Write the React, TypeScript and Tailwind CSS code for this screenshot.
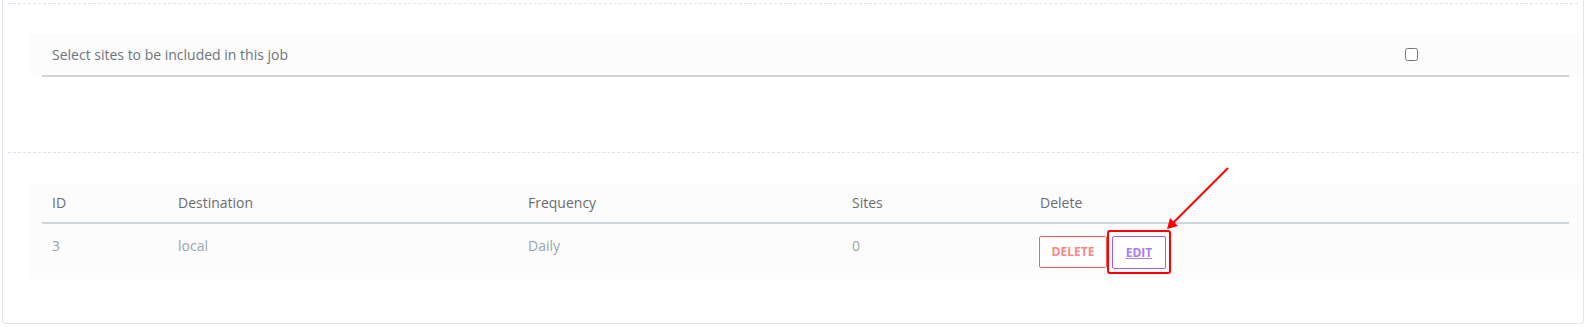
import React from "react";

interface Job {
    id: number;
    destination: string;
    frequency: string;
    sites: number;
}

const jobs: Job[] = [{ id: 3, destination: "local", frequency: "Daily", sites: 0 }];

const cols = "grid grid-cols-[126px_350px_324px_188px_1fr]";

export default function App() {
    return (
        <div className="bg-white pl-[2px] pr-[5px] h-[327px] overflow-hidden font-['Open_Sans',sans-serif] text-[14px]">
            <div className="border-x border-b border-[#dde5ee] rounded-b-[4px] h-[324px]">
                <div className="h-[4px] mx-[5px] border-b border-dashed border-[#dbe3ec]" />

                <div className="mx-[5px] mr-[4px] border-b border-dashed border-[#dbe3ec]">
                    <div className="pt-[30px] pb-[75px] ml-[22px] -mr-[1px]">
                        <div className="bg-[#fcfcfc] rounded-[4px] pl-[12px] pr-[11px]">
                            <div className="grid grid-cols-[1fr_200px] items-center h-[43px] border-b-2 border-[#d4d4d4]">
                                <span className="pl-[10px] text-[#6c757d]">Select sites to be included in this job</span>
                                <div className="flex">
                                    <input type="checkbox" className="w-[13px] h-[13px] ml-[36px] my-0 mr-0" />
                                </div>
                            </div>
                        </div>
                    </div>
                </div>

                <div className="pt-[30px] ml-[27px] mr-[3px]">
                    <div className="bg-[#fcfcfc] rounded-[4px] pl-[12px] pr-[11px] pb-[10px]">
                        <div className={`${cols} items-center h-[41px] border-b-2 border-[#cfd6de] text-[#6c6c6c]`}>
                            <div className="pl-[10px]">ID</div>
                            <div className="pl-[10px]">Destination</div>
                            <div className="pl-[10px]">Frequency</div>
                            <div className="pl-[10px]">Sites</div>
                            <div className="pl-[10px]">Delete</div>
                        </div>
                        {jobs.map((j) => (
                            <div key={j.id} className={`${cols} pt-[11px] text-[#98a6ad]`}>
                                <div className="pl-[10px]">{j.id}</div>
                                <div className="pl-[10px]">{j.destination}</div>
                                <div className="pl-[10px]">{j.frequency}</div>
                                <div className="pl-[10px]">{j.sites}</div>
                                <div className="pl-[9px] flex gap-[5px] pt-[1px]">
                                    <button className="w-[68px] h-[32px] border border-[#ff5b5b] rounded-[2px] bg-white text-[12px] font-bold text-[#ff8585]">
                                        DELETE
                                    </button>
                                    <div className="relative">
                                        <button className="w-[54px] h-[33px] border border-[#9b5cf6] rounded-[2px] bg-white text-[12px] font-bold text-[#a77cf5] underline">
                                            EDIT
                                        </button>
                                        <div className="absolute -left-[5px] -top-[6px] -right-[5px] -bottom-[5px] border-2 border-[#f00] rounded-[3px] pointer-events-none" />
                                        <svg
                                            className="absolute left-[48px] -top-[75px] pointer-events-none"
                                            width="75"
                                            height="75"
                                            viewBox="0 0 75 75"
                                        >
                                            <line x1="68" y1="7" x2="12" y2="63" stroke="#f00" strokeWidth="2" />
                                            <polygon points="7,68 10,57 18,65" fill="#f00" />
                                        </svg>
                                    </div>
                                </div>
                            </div>
                        ))}
                    </div>
                </div>
            </div>
        </div>
    );
}
